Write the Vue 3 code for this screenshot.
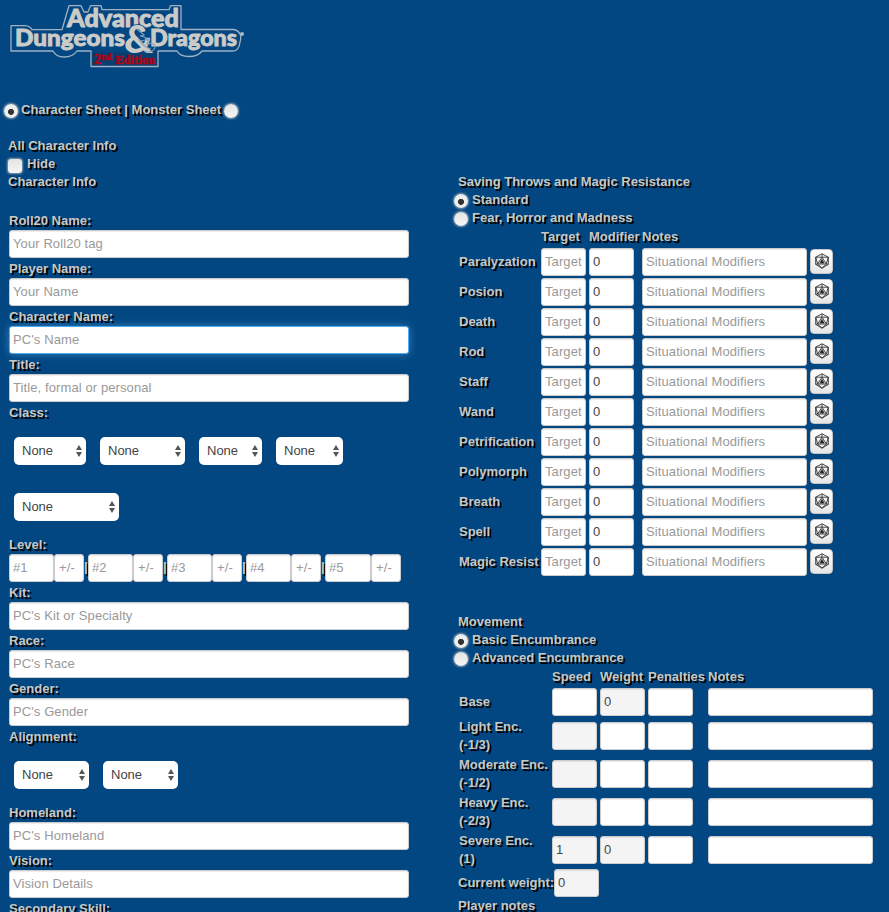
<script setup>
import { ref } from 'vue'

const identity = [
  { label: 'Roll20 Name:', hint: 'Your Roll20 tag' },
  { label: 'Player Name:', hint: 'Your Name' },
  { label: 'Character Name:', hint: "PC's Name", active: true },
  { label: 'Title:', hint: 'Title, formal or personal' }
]
const background = [
  { label: 'Kit:', hint: "PC's Kit or Specialty" },
  { label: 'Race:', hint: "PC's Race" },
  { label: 'Gender:', hint: "PC's Gender" }
]
const origin = [
  { label: 'Homeland:', hint: "PC's Homeland" },
  { label: 'Vision:', hint: 'Vision Details' }
]
const classWidths = [72, 85, 63, 67, 105]
const alignmentWidths = [75, 75]
const saves = ['Paralyzation', 'Posion', 'Death', 'Rod', 'Staff', 'Wand', 'Petrification', 'Polymorph', 'Breath', 'Spell', 'Magic Resist']
const loads = [
  { name: 'Base', weight: '0', lockWeight: true },
  { name: 'Light Enc.', factor: '(-1/3)', lockSpeed: true },
  { name: 'Moderate Enc.', factor: '(-1/2)', lockSpeed: true },
  { name: 'Heavy Enc.', factor: '(-2/3)', lockSpeed: true },
  { name: 'Severe Enc.', factor: '(1)', speed: '1', weight: '0', lockSpeed: true, lockWeight: true }
]
const sheet = ref('character')
const saveMode = ref('standard')
const encumbrance = ref('basic')
</script>

<template>
  <main class="sheet">
    <header>
      <svg class="logo" viewBox="0 0 240 68" role="img" aria-label="Advanced Dungeons &amp; Dragons 2nd Edition">
        <path class="plate" d="M91 52H158V66H91Z" />
        <path class="outline" d="M11 25.7H25Q30 26 32 29.7H62L69 5.7H81L84 12H88L90.5 5.7H101L102 9.7H169L170.5 5.7H181V29.5H234Q243 32 240 42Q239 51 233 51H202Q198 56.5 189 56.5Q180 56.5 177 51H158V66.5H91V51H77Q73 57 64 57Q56 57 53 51H11Z" />
        <text class="title" x="67" y="26.5" font-size="24.5" textLength="112" lengthAdjust="spacingAndGlyphs">Advanced</text>
        <text class="title" x="15" y="46" font-size="23.5" textLength="110" lengthAdjust="spacingAndGlyphs">Dungeons</text>
        <text class="title" x="150" y="46" font-size="23.5" textLength="87" lengthAdjust="spacingAndGlyphs">Dragons</text>
        <text class="title amp" x="124" y="52.5" font-size="37" textLength="29" lengthAdjust="spacingAndGlyphs">&amp;</text>
        <path class="dragon" d="M137 29L144 35L140 36Q151 38 147 44Q155 42 155 48Q151 54 144 51M138 38Q143 47 151 49M141 41L149 39" />
        <text class="edition" x="94" y="64" font-size="15" textLength="61" lengthAdjust="spacingAndGlyphs">2<tspan dy="-4" font-size="10">nd</tspan><tspan dy="4" font-size="13"> Edition</tspan></text>
        <circle class="mark" cx="242" cy="34" r="2" />
      </svg>
      <div class="switch">
        <input v-model="sheet" type="radio" name="sheet" value="character">
        <span>Character Sheet | Monster Sheet</span>
        <input v-model="sheet" type="radio" name="sheet" value="monster">
      </div>
    </header>

    <div class="visibility">
      <div>All Character Info</div>
      <label class="choice"><input type="checkbox">Hide</label>
    </div>

    <div class="columns">
      <section class="info">
        <h2>Character Info</h2>
        <div class="fields">
          <label v-for="f in identity" :key="f.label" class="field">{{ f.label }}<input :class="{ active: f.active }" type="text" :placeholder="f.hint"></label>
          <div>
            <div>Class:</div>
            <div class="selects">
              <span v-for="(w, i) in classWidths" :key="i" class="select" :style="{ width: w + 'px' }">
                <select><option>None</option></select>
                <svg viewBox="0 0 6 12"><path d="M0 5L3 0L6 5ZM0 7H6L3 12Z" /></svg>
              </span>
            </div>
          </div>
          <div class="level">
            <div>Level:</div>
            <div class="levels">
              <template v-for="n in 5" :key="n">
                <input class="rank" type="text" :placeholder="'#' + n"><input class="adjust" type="text" placeholder="+/-"><span v-if="n < 5" class="bar">|</span>
              </template>
            </div>
          </div>
          <label v-for="f in background" :key="f.label" class="field">{{ f.label }}<input type="text" :placeholder="f.hint"></label>
          <div>
            <div>Alignment:</div>
            <div class="selects">
              <span v-for="(w, i) in alignmentWidths" :key="i" class="select" :style="{ width: w + 'px' }">
                <select><option>None</option></select>
                <svg viewBox="0 0 6 12"><path d="M0 5L3 0L6 5ZM0 7H6L3 12Z" /></svg>
              </span>
            </div>
          </div>
          <label v-for="f in origin" :key="f.label" class="field">{{ f.label }}<input type="text" :placeholder="f.hint"></label>
          <div>Secondary Skill:</div>
        </div>
      </section>

      <section class="stats">
        <h2>Saving Throws and Magic Resistance</h2>
        <label class="choice radio"><input v-model="saveMode" type="radio" name="save" value="standard">Standard</label>
        <label class="choice radio"><input v-model="saveMode" type="radio" name="save" value="fear">Fear, Horror and Madness</label>
        <div class="grid saves head"><span /><span>Target</span><span>Modifier</span><span class="notes">Notes</span></div>
        <div v-for="s in saves" :key="s" class="grid saves">
          <span class="name">{{ s }}</span>
          <input class="target" type="text" placeholder="Target">
          <input type="text" value="0">
          <input class="notes" type="text" placeholder="Situational Modifiers">
          <button type="button" :aria-label="'Roll ' + s">
            <svg viewBox="0 0 16 16"><path d="M8 .8L14.3 4.2V11.4L8 15.2L1.7 11.4V4.2ZM8 .8V4.2M1.7 4.2L8 4.2L14.3 4.2M8 4.2L3.7 11H12.3ZM1.7 4.2L3.7 11L8 15.2L12.3 11L14.3 4.2M1.7 11.4L3.7 11M14.3 11.4L12.3 11" /><path class="pip" d="M8 6.5L10 10H6Z" /></svg>
          </button>
        </div>

        <h2 class="movement">Movement</h2>
        <label class="choice radio"><input v-model="encumbrance" type="radio" name="enc" value="basic">Basic Encumbrance</label>
        <label class="choice radio"><input v-model="encumbrance" type="radio" name="enc" value="advanced">Advanced Encumbrance</label>
        <div class="grid loads head"><span /><span>Speed</span><span>Weight</span><span>Penalties</span><span class="notes">Notes</span></div>
        <div v-for="l in loads" :key="l.name" class="grid loads" :class="{ tall: l.factor }">
          <span class="name">{{ l.name }}<template v-if="l.factor"><br>{{ l.factor }}</template></span>
          <input type="text" :value="l.speed" :readonly="l.lockSpeed">
          <input type="text" :value="l.weight" :readonly="l.lockWeight">
          <input type="text">
          <input class="notes" type="text">
        </div>
        <div class="current"><span>Current weight:</span><input type="text" value="0" readonly></div>
        <div>Player notes</div>
      </section>
    </div>
  </main>
</template>

<style>
body {
  background: #024782;
}
</style>

<style scoped>
.sheet {
  box-sizing: border-box;
  height: 912px;
  overflow: hidden;
  background: #024782;
  color: #c8c8c3;
  font: bold 13px/18px "Liberation Sans", Arial, sans-serif;
  text-shadow: 2px 2px 0 #000;
}
header {
  height: 137px;
}
.logo {
  display: block;
  width: 240px;
  height: 68px;
  margin-bottom: 33px;
  overflow: visible;
  text-shadow: none;
}
.title {
  fill: #cbcbc8;
  stroke: #cbcbc8;
  stroke-width: .9;
  font-family: Lato, sans-serif;
  font-weight: 900;
}
.amp {
  stroke: #024782;
  stroke-width: 1.6;
  paint-order: stroke;
}
.edition {
  fill: #a90516;
  stroke: #a90516;
  stroke-width: .7;
  font-family: "Liberation Serif", serif;
}
.outline {
  fill: none;
  stroke: #9fb1c2;
  stroke-width: 1.3;
  stroke-linejoin: round;
}
.plate {
  fill: #073f73;
}
.dragon {
  fill: none;
  stroke: #7e9fbd;
  stroke-width: 1.2;
}
.mark {
  fill: #a9b8c6;
}
h2 {
  margin: 0;
  font: inherit;
}
input, select {
  box-sizing: border-box;
  margin: 0;
  font: 13px "Liberation Sans", Arial, sans-serif;
}
input[type="text"] {
  display: block;
  min-width: 0;
  height: 28px;
  padding: 0 3px 1px;
  border: 1px solid #ccc;
  border-radius: 3px;
  outline: none;
  background: #fff;
  box-shadow: inset 0 1px 1px rgba(0, 0, 0, .08);
  color: #444;
  letter-spacing: .1px;
}
input[readonly] {
  background: #f4f4f4;
}
input::placeholder {
  color: #999;
  opacity: 1;
}
input.active {
  border-color: #52a8ec;
  box-shadow: 0 0 8px rgba(82, 168, 236, .6);
}
input[type="radio"], input[type="checkbox"] {
  flex: none;
  width: 14px;
  height: 14px;
  appearance: none;
  background: linear-gradient(#e4e4e4, #f5f5f5);
  box-shadow: 0 0 2px 1px #8b9cad;
}
input[type="radio"] {
  border-radius: 50%;
}
input[type="radio"]:checked {
  background: radial-gradient(circle at 50% 56%, #333 2.7px, #eee 3.3px);
}
input[type="checkbox"] {
  border-radius: 3px;
}
.switch {
  display: flex;
  align-items: center;
  gap: 3px;
  padding-left: 4px;
}
.switch input {
  position: relative;
  top: 1px;
}
.visibility {
  padding-left: 8px;
}
.choice {
  display: flex;
  align-items: center;
  gap: 4px;
  height: 18px;
}
.choice input {
  margin: 3px 1px 0 0;
}
.radio {
  margin-left: -4px;
}
.radio input {
  margin: 1px 0 0;
}
.columns {
  display: grid;
  grid-template-columns: 450px 1fr;
  padding-left: 8px;
}
.fields {
  padding: 21px 0 0 1px;
}
.field {
  display: block;
  height: 48px;
}
.field input {
  width: 400px;
}
.selects {
  display: flex;
  flex-wrap: wrap;
  gap: 28px 14px;
  width: 400px;
  padding: 15px 5px;
  box-sizing: border-box;
}
.select {
  position: relative;
  height: 28px;
}
.select select {
  display: block;
  width: 100%;
  height: 28px;
  padding: 0 8px 1px;
  border: 0;
  border-radius: 5px;
  appearance: none;
  background: #fff;
  color: #444;
}
.select svg {
  position: absolute;
  top: 8px;
  right: 4px;
  width: 6px;
  height: 12px;
  fill: #555;
}
.level {
  height: 48px;
}
.levels {
  display: flex;
}
.levels .rank {
  width: 45px;
}
.levels .rank:nth-last-child(2) {
  width: 46px;
}
.levels .adjust {
  width: 30px;
  padding-left: 4px;
}
.bar {
  width: 4px;
  line-height: 26px;
}
.grid {
  display: grid;
  column-gap: 3px;
  height: 30px;
  padding-left: 1px;
}
.saves {
  grid-template-columns: 79px 45px 45px 170px 23px;
}
.saves .target {
  padding-right: 0;
}
.saves .notes {
  margin-left: 5px;
}
.loads {
  grid-template-columns: 90px 45px 45px 45px 177px;
}
.loads .notes {
  margin-left: 12px;
}
.head {
  box-sizing: border-box;
  height: 21px;
  padding-top: 1px;
  white-space: nowrap;
}
.head .notes {
  margin-left: 5px;
}
.loads.head .notes {
  margin-left: 12px;
}
.name {
  line-height: 28px;
  white-space: nowrap;
}
.tall {
  height: 38px;
}
.tall .name {
  line-height: 18px;
}
.tall input {
  margin-top: 4px;
}
button {
  display: grid;
  place-items: center;
  width: 23px;
  height: 25px;
  margin: 1px 0 0;
  padding: 0 0 2px;
  border: 1px solid #c5c5c5;
  border-radius: 4px;
  background: linear-gradient(#fff, #e6e6e6);
}
button svg {
  width: 16px;
  height: 16px;
  fill: none;
  stroke: #333;
  stroke-width: .9;
}
button .pip {
  fill: #222;
}
.movement {
  margin-top: 35px;
}
.current {
  display: flex;
  align-items: center;
  height: 28px;
  margin-top: -1px;
}
.current span {
  width: 96px;
  white-space: nowrap;
}
.current input {
  width: 45px;
}
</style>
